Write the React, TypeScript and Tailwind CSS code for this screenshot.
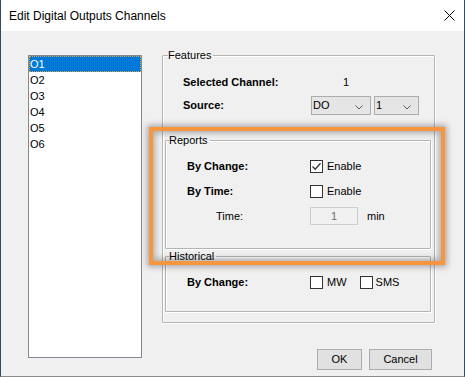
import React from "react";

function Chevron() {
  return (
    <svg width="8" height="5" viewBox="0 0 8 5" className="block">
      <path d="M0.5 0.5 L4 4 L7.5 0.5" fill="none" stroke="#606060" strokeWidth="1" />
    </svg>
  );
}

function Select({ value, width }: { value: string; width: string }) {
  return (
    <div className={`${width} h-[19px] border border-[#acacac] bg-[#e5e5e5] flex items-center justify-between pl-[1px] pr-[7px]`}>
      <span>{value}</span>
      <span className="mt-[3px]"><Chevron /></span>
    </div>
  );
}

function Check({ checked }: { checked?: boolean }) {
  return (
    <div className="w-[13px] h-[13px] border border-[#333333] bg-white flex items-center justify-center shrink-0">
      {checked && (
        <svg width="11" height="11" viewBox="0 0 11 11" className="block">
          <path d="M1.5 5.5 L4.2 8.2 L9.5 2.2" fill="none" stroke="#333333" strokeWidth="1.3" />
        </svg>
      )}
    </div>
  );
}

function Legend({ children }: { children: React.ReactNode }) {
  return <legend className="ml-[3px] pr-[2px] leading-[13px] text-[11px]">{children}</legend>;
}

const groupCls = "border border-[#b4b4b4] shadow-[inset_1px_1px_0_#ffffff,1px_1px_0_#ffffff] rounded-[1px]";

export default function App() {
  const items = ["O1", "O2", "O3", "O4", "O5", "O6"];
  return (
    <div
      className="relative w-[465px] h-[377px] bg-[#f0f0f0] border-l border-r border-[#34495e] border-b border-b-[#8a8a8a] flex flex-col text-[11px] text-black overflow-hidden"
      style={{ fontFamily: '"Liberation Sans", Arial, sans-serif' }}
    >
      {/* Title bar */}
      <div className="h-[31px] bg-white flex items-center justify-between shrink-0">
        <span className="pl-[8px] text-[12px] text-black">Edit Digital Outputs Channels</span>
        <div className="w-[30px] h-[31px] flex items-center justify-center">
          <svg width="11" height="11" viewBox="0 0 11 11" className="block">
            <path d="M0.5 0.5 L10.5 10.5 M10.5 0.5 L0.5 10.5" stroke="#000" strokeWidth="1" />
          </svg>
        </div>
      </div>

      {/* Body */}
      <div className="flex flex-row pl-[27px] pt-[18px]">
        {/* List box */}
        <div className="mt-[6px] w-[114px] h-[303px] border border-[#828790] bg-white flex flex-col">
          {items.map((it, i) => (
            <div
              key={it}
              className={
                i === 0
                  ? "h-[16px] bg-[#0078d7] text-white border border-dotted border-[#d9a54a] flex items-center pl-0"
                  : "h-[16px] flex items-center pl-[1px]"
              }
            >
              {it}
            </div>
          ))}
        </div>

        {/* Right column */}
        <div className="ml-[20px] flex flex-col">
          <fieldset className={`${groupCls} w-[273px] h-[274px] px-[2px] flex flex-col`}>
            <Legend>Features</Legend>
            <div className="mt-[12px] h-[16px] flex items-center pl-[18px]">
              <span className="w-[128px] font-bold">Selected Channel:</span>
              <span className="ml-[32px]">1</span>
            </div>
            <div className="mt-[6px] h-[19px] flex items-center pl-[18px]">
              <span className="w-[128px] font-bold">Source:</span>
              <Select value="DO" width="w-[60px]" />
              <div className="ml-[3px]">
                <Select value="1" width="w-[45px]" />
              </div>
            </div>

            <fieldset className={`${groupCls} mt-[19px] w-[266px] h-[115px] flex flex-col`}>
              <Legend>Reports</Legend>
              <div className="mt-[13px] h-[13px] flex items-center pl-[21px]">
                <span className="w-[123px] font-bold">By Change:</span>
                <Check checked />
                <span className="ml-[4px]">Enable</span>
              </div>
              <div className="mt-[12px] h-[13px] flex items-center pl-[21px]">
                <span className="w-[123px] font-bold">By Time:</span>
                <Check />
                <span className="ml-[4px]">Enable</span>
              </div>
              <div className="mt-[9px] h-[18px] flex items-center pl-[50px]">
                <span className="w-[94px]">Time:</span>
                <div className="w-[48px] h-[18px] border border-[#cccccc] bg-[#f0f0f0] flex items-center justify-center text-[#6d6d6d]">
                  1
                </div>
                <span className="ml-[9px]">min</span>
              </div>
            </fieldset>

            <fieldset className={`${groupCls} mt-[1px] w-[266px] h-[62px] flex flex-col`}>
              <Legend>Historical</Legend>
              <div className="mt-[13px] h-[13px] flex items-center pl-[21px]">
                <span className="w-[123px] font-bold">By Change:</span>
                <Check />
                <span className="ml-[4px]">MW</span>
                <div className="ml-[13px]">
                  <Check />
                </div>
                <span className="ml-[3px]">SMS</span>
              </div>
            </fieldset>
          </fieldset>

          <div className="mt-[26px] flex justify-end gap-[7px] pr-[3px]">
            <div className="w-[45px] h-[21px] bg-[#e1e1e1] border border-[#adadad] flex items-center justify-center">OK</div>
            <div className="w-[63px] h-[21px] bg-[#e1e1e1] border border-[#adadad] flex items-center justify-center">Cancel</div>
          </div>
        </div>
      </div>

      {/* Orange highlight annotation */}
      <div className="absolute left-[148px] top-[127px] w-[296px] h-[138px] border-[4px] border-[#f7963f] shadow-[0_0_6px_2px_rgba(0,0,0,0.3),inset_0_0_6px_2px_rgba(0,0,0,0.3)] pointer-events-none" />
    </div>
  );
}
